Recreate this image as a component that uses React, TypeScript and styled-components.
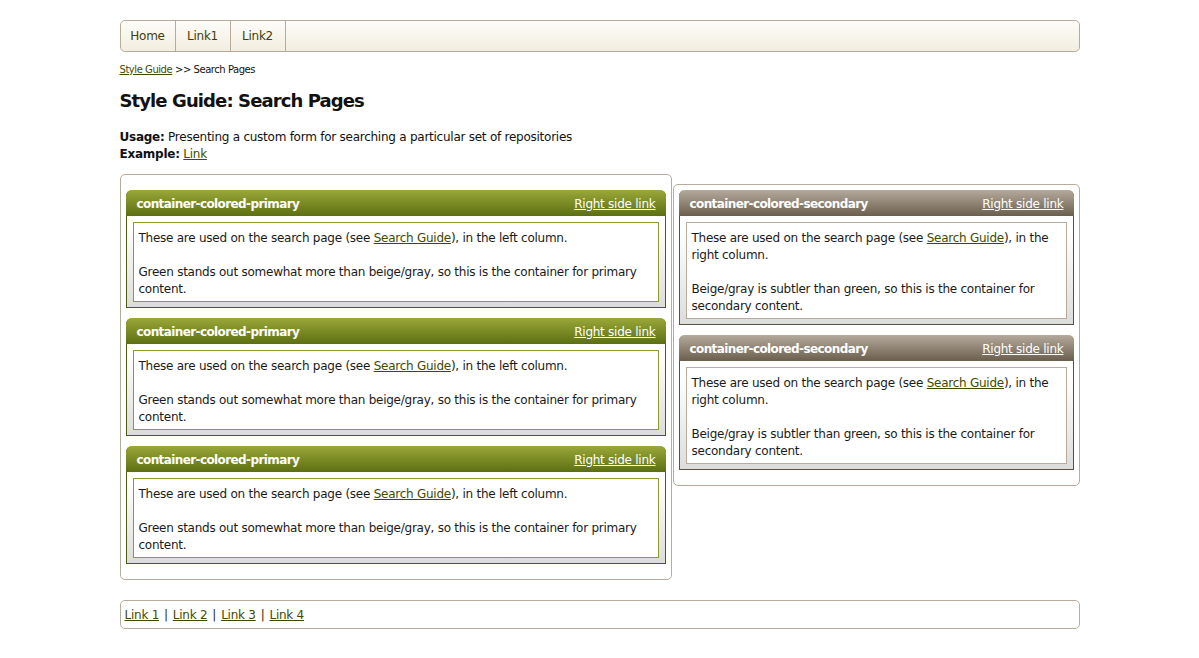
import React from "react";
import styled, { createGlobalStyle } from "styled-components";

const Global = createGlobalStyle`
  html, body { margin: 0; padding: 0; background: #fff; }
  body {
    font-family: "DejaVu Sans", Verdana, sans-serif;
    font-size: 12px;
    letter-spacing: -0.25px;
    color: #111;
  }
`;

const Page = styled.div`
  width: 960px;
  margin: 20px auto 0;
`;

const Nav = styled.nav`
  display: flex;
  height: 30px;
  border: 1px solid #b9ab9c;
  border-radius: 5px;
  background: linear-gradient(#fdfcf9, #f2eddf);
`;

const NavItem = styled.a`
  display: flex;
  align-items: center;
  justify-content: center;
  width: 54px;
  border-right: 1px solid #b9ab9c;
  color: #3f3f08;
  font-size: 12px;
  text-decoration: none;
`;

const Crumbs = styled.div`
  margin-top: 11px;
  font-size: 10px;
  line-height: 14px;
  letter-spacing: -0.45px;
`;

const OliveLink = styled.a`
  color: #3f4a00;
  text-decoration: underline;
`;

const Title = styled.h1`
  margin: 12px 0 0;
  font-size: 18px;
  line-height: 24px;
  font-weight: bold;
  letter-spacing: -0.9px;
`;

const Usage = styled.div`
  margin-top: 16px;
  font-size: 12px;
  line-height: 17px;
`;

const Columns = styled.div`
  display: grid;
  grid-template-columns: 552px 407px;
  column-gap: 1px;
  align-items: start;
  margin-top: 11px;
`;

const Column = styled.div<{ $top: number; $offset: number }>`
  display: flex;
  flex-direction: column;
  gap: 10px;
  margin-top: ${(p) => p.$offset}px;
  padding: ${(p) => p.$top}px 5px 15px;
  border: 1px solid #b9ab9c;
  border-radius: 5px;
`;

const Panel = styled.section<{ $variant: "primary" | "secondary" }>`
  border: 1px solid ${(p) => (p.$variant === "primary" ? "#4d5e12" : "#5b4f42")};
  border-top: none;
  border-radius: 6px 6px 0 0;
  background: linear-gradient(#ffffff 30%, #dcdcdc);
`;

const PanelHead = styled.header<{ $variant: "primary" | "secondary" }>`
  display: flex;
  justify-content: space-between;
  align-items: center;
  height: 26px;
  box-sizing: border-box;
  margin: 0 -1px;
  padding: 1px 10px 0 11px;
  border-radius: 6px 6px 0 0;
  background: ${(p) =>
    p.$variant === "primary"
      ? "linear-gradient(#9aa839, #5c6f12)"
      : "linear-gradient(#b4aa9c, #6b5e4d)"};
  color: #fff;
  font-weight: bold;
  font-size: 12px;
  letter-spacing: -0.6px;
`;

const HeadLink = styled.a`
  color: #fff;
  font-weight: normal;
  letter-spacing: -0.25px;
  text-decoration: underline;
`;

const PanelBody = styled.div<{ $variant: "primary" | "secondary" }>`
  margin: 6px 6px 5px;
  padding: 7px 5px 3px;
  background: #fff;
  border: 1px solid ${(p) => (p.$variant === "primary" ? "#8e9b2a" : "#b9ab9e")};
  font-size: 12px;
  line-height: 17px;
  color: #1a1a1a;
`;

const Para = styled.p`
  margin: 0 0 17px;
  &:last-child { margin-bottom: 0; }
`;

const Footer = styled.footer`
  margin-top: 20px;
  padding: 6px 4px 4px;
  border: 1px solid #b9ab9c;
  border-radius: 5px;
  font-size: 12px;
  line-height: 17px;
`;

const Sep = styled.span`
  color: #2a2a00;
  margin: 0 5px;
`;

type Variant = "primary" | "secondary";

const ColoredPanel = ({ variant }: { variant: Variant }) => (
  <Panel $variant={variant}>
    <PanelHead $variant={variant}>
      <span>container-colored-{variant}</span>
      <HeadLink href="#">Right side link</HeadLink>
    </PanelHead>
    <PanelBody $variant={variant}>
      <Para>
        These are used on the search page (see <OliveLink href="#">Search Guide</OliveLink>), in the{" "}
        {variant === "primary" ? "left" : "right"} column.
      </Para>
      <Para>
        {variant === "primary"
          ? "Green stands out somewhat more than beige/gray, so this is the container for primary content."
          : "Beige/gray is subtler than green, so this is the container for secondary content."}
      </Para>
    </PanelBody>
  </Panel>
);

export default function App() {
  return (
    <>
      <Global />
      <Page>
        <Nav>
          <NavItem href="#">Home</NavItem>
          <NavItem href="#">Link1</NavItem>
          <NavItem href="#">Link2</NavItem>
        </Nav>
        <Crumbs>
          <OliveLink href="#">Style Guide</OliveLink> &gt;&gt; Search Pages
        </Crumbs>
        <Title>Style Guide: Search Pages</Title>
        <Usage>
          <b>Usage:</b> Presenting a custom form for searching a particular set of repositories
          <br />
          <b>Example:</b> <OliveLink href="#">Link</OliveLink>
        </Usage>
        <Columns>
          <Column $top={15} $offset={0}>
            <ColoredPanel variant="primary" />
            <ColoredPanel variant="primary" />
            <ColoredPanel variant="primary" />
          </Column>
          <Column $top={5} $offset={10}>
            <ColoredPanel variant="secondary" />
            <ColoredPanel variant="secondary" />
          </Column>
        </Columns>
        <Footer>
          <OliveLink href="#">Link 1</OliveLink>
          <Sep>|</Sep>
          <OliveLink href="#">Link 2</OliveLink>
          <Sep>|</Sep>
          <OliveLink href="#">Link 3</OliveLink>
          <Sep>|</Sep>
          <OliveLink href="#">Link 4</OliveLink>
        </Footer>
      </Page>
    </>
  );
}
